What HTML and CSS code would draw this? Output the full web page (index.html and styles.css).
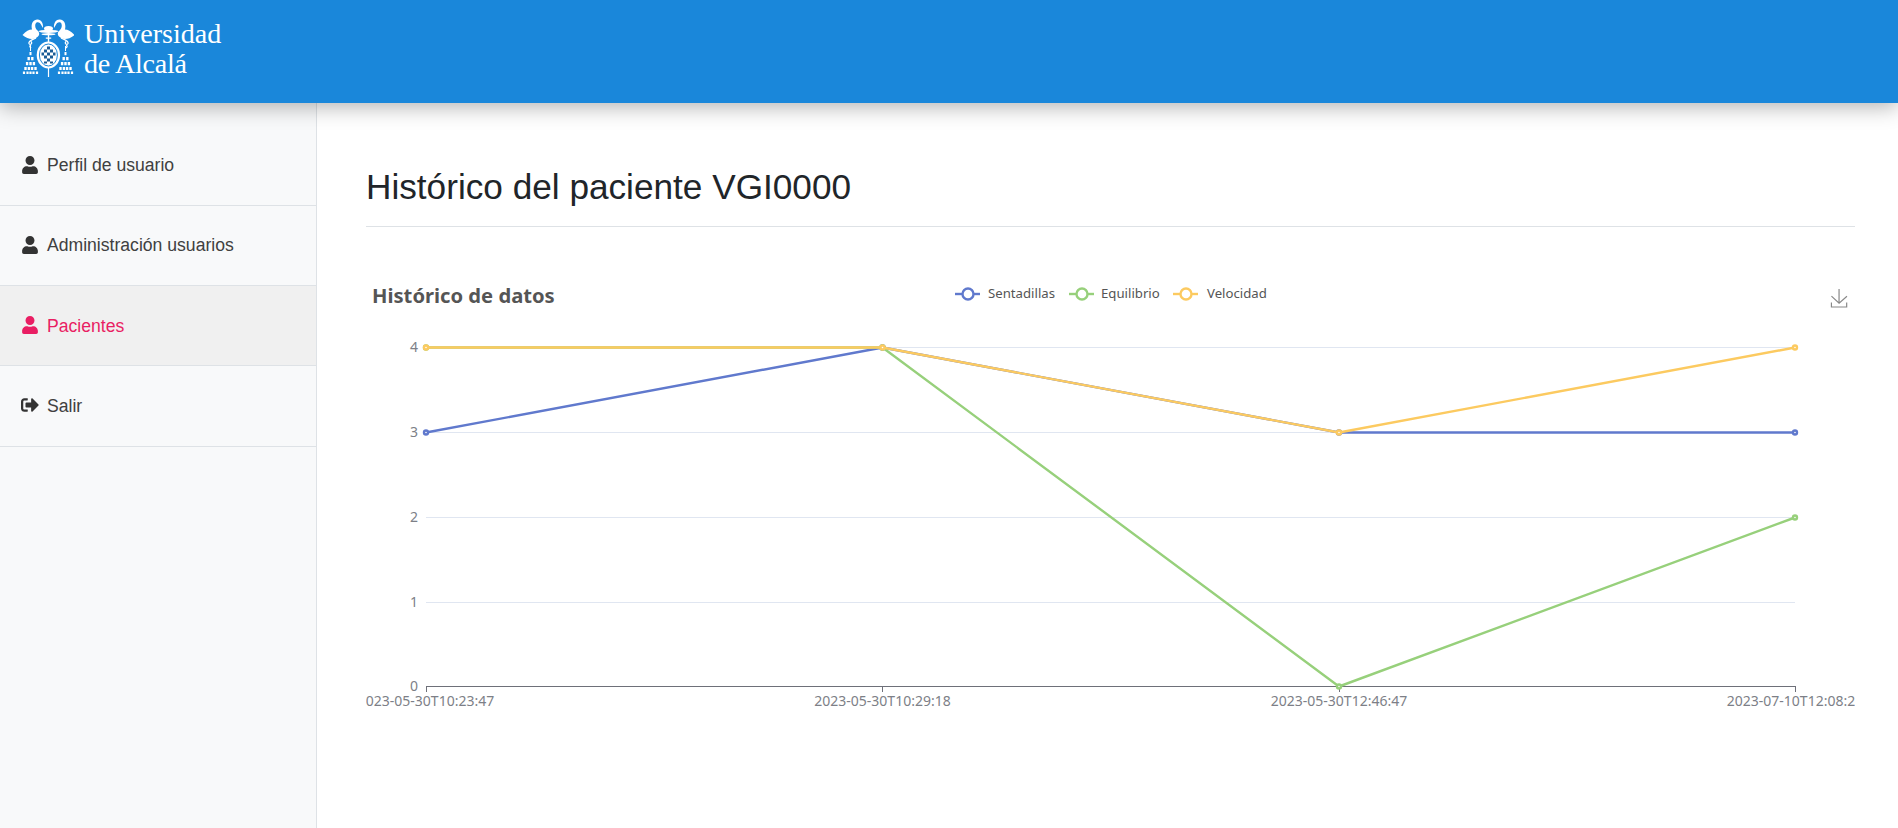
FILE: index.html
```html
<!DOCTYPE html>
<html lang="es">
<head>
<meta charset="utf-8">
<title>Histórico del paciente VGI0000</title>
<link rel="stylesheet" href="styles.css">
</head>
<body>
<header class="topbar">
  <div class="logo">
    <svg class="crest" viewBox="22 18 52 62" width="52" height="62" aria-hidden="true">
      <defs>
        <g id="tassel">
          <path d="M-.5 -6h1v5h-1z"/>
          <path d="M-1 0h2v3.2h-2z"/>
          <path d="M-3 5h2.4v3.2h-2.4zM.6 5h2.4v3.2h-2.4z"/>
          <path d="M-4.6 10h2.4v3.2h-2.4zM-1.2 10h2.4v3.2h-2.4zM2.2 10h2.4v3.2h-2.4z"/>
          <path d="M-6.2 15h2.4v3h-2.4zM-2.8 15h2.4v3h-2.4zM.4 15h2.4v3h-2.4zM3.8 15h2.4v3h-2.4z"/>
          <path d="M-7.6 19.4h2.2v2.6h-2.2zM-4.1 19.4h2.2v2.6h-2.2zM-1.1 19.4h2.2v2.6h-2.2zM1.9 19.4h2.2v2.6h-2.2zM5.4 19.4h2.2v2.6h-2.2z"/>
        </g>
        <path id="swan" d="M22.5 35C26 31 29 29.500 32 29.500C31 25 32 20 37 19.500C41 19 43.500 23 43 28L41.500 25.500C40.500 22.500 38 21.500 36.500 22.500C34.500 24 35 28 37 30C39.500 32 40 34.500 38 36.500C34 40.500 28 39.500 22.500 35Z"/>
      </defs>
      <g class="crest-white">
        <use href="#swan"/>
        <use href="#swan" transform="translate(97 0) scale(-1 1)"/>
        <ellipse cx="48.500" cy="28.500" rx="4.500" ry="2.500"/>
        <ellipse cx="48.500" cy="31.300" rx="10" ry="1.600"/>
        <ellipse cx="48.500" cy="34.200" rx="7" ry="1.100"/>
        <path d="M47.800 35h1.400v7h-1.400zM45.800 37.500h5.400v1.200h-5.400z"/>
        <ellipse cx="48.400" cy="55" rx="11.700" ry="13.600"/>
        <path d="M47.900 67h1.200v10h-1.200z"/>
        <use href="#tassel" transform="translate(30.500 52)"/>
        <use href="#tassel" transform="translate(65.500 52)"/>
      </g>
      <g class="crest-cords">
        <path d="M36 38C32 40 28 41 29 43.500C30 45.500 33 43.500 31 41.500M31 45C29 46 30 47 31 48"/>
        <path d="M61 38C65 40 69 41 68 43.500C67 45.500 64 43.500 66 41.500M66 45C68 46 67 47 66 48"/>
      </g>
      <ellipse class="crest-ring" cx="48.400" cy="55" rx="9" ry="11"/>
      <path class="crest-check" d="M47 46.500h3v3h-3zM44 49.500h3v3h-3zM50 49.500h3v3h-3zM41.500 52.500h2.500v3h-2.500zM47 52.500h3v3h-3zM53 52.500h2.500v3h-2.500zM44 55.500h3v3h-3zM50 55.500h3v3h-3zM47 58.500h3v3h-3zM44 61.500h3v2h-3zM50 61.500h3v2h-3z"/>
    </svg>
    <div class="wordmark"><span>Universidad</span><span class="wordmark-second">de Alcalá</span></div>
  </div>
</header>
<div class="shell">
  <aside class="sidebar">
    <nav class="menu">
      <a class="menu-item" href="#">
        <svg class="menu-icon" viewBox="0 0 448 512"><path d="M224 256c70.700 0 128-57.300 128-128S294.700 0 224 0 96 57.300 96 128s57.300 128 128 128zm89.600 32h-16.700c-22.200 10.200-46.900 16-72.900 16s-50.600-5.800-72.900-16h-16.700C60.200 288 0 348.200 0 422.400V464c0 26.500 21.500 48 48 48h352c26.500 0 48-21.500 48-48v-41.600c0-74.200-60.200-134.400-134.400-134.400z"/></svg>
        <span class="menu-label">Perfil de usuario</span>
      </a>
      <a class="menu-item" href="#">
        <svg class="menu-icon" viewBox="0 0 448 512"><path d="M224 256c70.700 0 128-57.300 128-128S294.700 0 224 0 96 57.300 96 128s57.300 128 128 128zm89.600 32h-16.700c-22.200 10.200-46.900 16-72.900 16s-50.600-5.800-72.900-16h-16.700C60.200 288 0 348.200 0 422.400V464c0 26.500 21.500 48 48 48h352c26.500 0 48-21.500 48-48v-41.600c0-74.200-60.200-134.400-134.400-134.400z"/></svg>
        <span class="menu-label">Administración usuarios</span>
      </a>
      <a class="menu-item is-active" href="#">
        <svg class="menu-icon" viewBox="0 0 448 512"><path d="M224 256c70.700 0 128-57.300 128-128S294.700 0 224 0 96 57.300 96 128s57.300 128 128 128zm89.600 32h-16.700c-22.200 10.200-46.900 16-72.900 16s-50.600-5.800-72.900-16h-16.700C60.200 288 0 348.200 0 422.400V464c0 26.500 21.500 48 48 48h352c26.500 0 48-21.500 48-48v-41.600c0-74.200-60.200-134.400-134.400-134.400z"/></svg>
        <span class="menu-label">Pacientes</span>
      </a>
      <a class="menu-item" href="#">
        <svg class="menu-icon menu-icon-wide" viewBox="0 0 512 512"><path d="M497 273L329 441c-15 15-41 4.500-41-17v-96H152c-13.300 0-24-10.700-24-24v-96c0-13.300 10.700-24 24-24h136V88c0-21.400 25.900-32 41-17l168 168c9.300 9.400 9.300 24.600 0 34zM192 436v-40c0-6.600-5.400-12-12-12H96c-17.700 0-32-14.300-32-32V160c0-17.700 14.300-32 32-32h84c6.600 0 12-5.400 12-12V76c0-6.600-5.400-12-12-12H96c-53 0-96 43-96 96v192c0 53 43 96 96 96h84c6.600 0 12-5.400 12-12z"/></svg>
        <span class="menu-label">Salir</span>
      </a>
    </nav>
  </aside>
  <main class="content">
    <h1 class="page-title">Histórico del paciente VGI0000</h1>
    <svg class="chart" viewBox="366 270 1489 460" width="1489" height="460">
      <text class="chart-title" x="372" y="303">Histórico de datos</text>

      <g class="legend-item sentadillas">
        <path class="legend-line" d="M955 294h25"/><circle cx="968" cy="294" r="5.500"/>
      </g>
      <text class="legend-text" x="988" y="298">Sentadillas</text>
      <g class="legend-item equilibrio">
        <path class="legend-line" d="M1069 294h25"/><circle cx="1082" cy="294" r="5.500"/>
      </g>
      <text class="legend-text" x="1101" y="298">Equilibrio</text>
      <g class="legend-item velocidad">
        <path class="legend-line" d="M1173 294h25"/><circle cx="1186" cy="294" r="5.500"/>
      </g>
      <text class="legend-text" x="1207" y="298">Velocidad</text>

      <path class="save-icon" transform="translate(1830 289) scale(.31)" d="M4.700 22.900L29.300 45.500L54.700 23.400M4.600 43.600L4.600 58L53.800 58L53.800 43.600M29.200 45.100L29.200 0"/>

      <path class="grid" d="M426 347.500H1795M426 432.500H1795M426 517.500H1795M426 602.500H1795"/>
      <path class="axis" d="M426 686.500H1795M426.500 686v6M882.500 686v6M1339.500 686v6M1795.500 686v6"/>

      <text class="y-label" x="418" y="351.500">4</text>
      <text class="y-label" x="418" y="436.500">3</text>
      <text class="y-label" x="418" y="521.500">2</text>
      <text class="y-label" x="418" y="606.500">1</text>
      <text class="y-label" x="418" y="690.500">0</text>

      <text class="x-label" x="426" y="705.500">2023-05-30T10:23:47</text>
      <text class="x-label" x="882.500" y="705.500">2023-05-30T10:29:18</text>
      <text class="x-label" x="1339" y="705.500">2023-05-30T12:46:47</text>
      <text class="x-label" x="1795" y="705.500">2023-07-10T12:08:24</text>

      <g class="series sentadillas">
        <polyline points="426,432.500 882.500,347.500 1339,432.500 1795,432.500"/>
        <circle cx="426" cy="432.500" r="2"/><circle cx="882.500" cy="347.500" r="2"/><circle cx="1339" cy="432.500" r="2"/><circle cx="1795" cy="432.500" r="2"/>
      </g>
      <g class="series equilibrio">
        <polyline points="426,347.500 882.500,347.500 1339,686.500 1795,517.500"/>
        <circle cx="426" cy="347.500" r="2"/><circle cx="882.500" cy="347.500" r="2"/><circle cx="1339" cy="686.500" r="2"/><circle cx="1795" cy="517.500" r="2"/>
      </g>
      <g class="series velocidad">
        <polyline points="426,347.500 882.500,347.500 1339,432.500 1795,347.500"/>
        <circle cx="426" cy="347.500" r="2"/><circle cx="882.500" cy="347.500" r="2"/><circle cx="1339" cy="432.500" r="2"/><circle cx="1795" cy="347.500" r="2"/>
      </g>
    </svg>
  </main>
</div>
</body>
</html>
```
FILE: styles.css
```css
* { box-sizing: border-box; }
html, body { height: 100%; }
body {
  margin: 0;
  height: 828px;
  overflow: hidden;
  display: flex;
  flex-direction: column;
  font-family: "Liberation Sans", Arial, sans-serif;
  background: #fff;
  color: #212529;
}

.topbar {
  height: 103px;
  flex: none;
  background: #1a87da;
  box-shadow: 0 4px 20px rgba(0, 0, 0, .3);
  position: relative;
  z-index: 2;
  padding: 18px 0 0 22px;
}
.logo { display: flex; align-items: flex-start; gap: 10px; }
.crest { display: block; flex: none; }
.crest-white { fill: #fff; }
.crest-cords { fill: none; stroke: #fff; stroke-width: 1.3; }
.crest-ring { fill: none; stroke: #1a87da; stroke-width: 1; }
.crest-check { fill: #1a5c96; }
.wordmark {
  display: flex;
  flex-direction: column;
  margin-top: 1px;
  font-family: "Liberation Serif", "Times New Roman", serif;
  font-size: 28.100px;
  line-height: 30px;
  color: #fff;
}
.wordmark-second { letter-spacing: -.3px; }

.shell { flex: 1; display: flex; min-height: 0; }
.sidebar {
  width: 317px;
  flex: none;
  background: #f8f9fa;
  border-right: 1px solid #dee2e6;
  padding-top: 23px;
}
.menu { display: flex; flex-direction: column; }
.menu-item {
  height: 80px;
  display: flex;
  align-items: center;
  gap: 9px;
  padding-left: 22px;
  padding-bottom: 2px;
  border-bottom: 1px solid #dee2e6;
  font-size: 17.6px;
  color: #404040;
  text-decoration: none;
}
.menu-item:nth-child(4) { height: 81px; }
.menu-item.is-active { background: #f0f0f0; color: #e91e63; }
.menu-label { padding-top: 2px; }
.is-active .menu-label { padding-top: 4px; }
.menu-icon { width: 16px; height: 18px; fill: #333; flex: none; }
.menu-icon-wide { width: 18px; margin: 0 -1px; }
.is-active .menu-icon { fill: #e91e63; }

.content { flex: 1; min-width: 0; padding: 0 43px 0 49px; }
.page-title {
  margin: 0;
  padding: 63px 0 19px;
  height: 124px;
  font-size: 35.2px;
  line-height: 42px;
  font-weight: 400;
  color: #212529;
  border-bottom: 1px solid #dee2e6;
}
.chart { display: block; margin-top: 43px; overflow: hidden; }
.chart-title { font: 700 20.200px "Noto Sans", sans-serif; fill: #555; }
.legend-text { font: 13.200px "Noto Sans", sans-serif; fill: #555; }
.legend-line { fill: none; stroke-width: 2.400; }
.legend-item circle { fill: #fff; stroke-width: 2.400; }
.save-icon { fill: none; stroke: #888; stroke-width: 3.800; }
.grid { fill: none; stroke: #e0e6f1; stroke-width: 1; }
.axis { fill: none; stroke: #6e7079; stroke-width: 1; }
.y-label { font: 14px "Noto Sans", sans-serif; fill: #7d7f87; text-anchor: end; }
.x-label { font: 14px "Noto Sans", sans-serif; fill: #7d7f87; text-anchor: middle; }
.series polyline { fill: none; stroke-width: 2.400; stroke-linejoin: round; }
.series circle { fill: #fff; stroke-width: 2.400; }
.sentadillas polyline, .sentadillas circle, .sentadillas .legend-line { stroke: #6079cd; }
.equilibrio polyline, .equilibrio circle, .equilibrio .legend-line { stroke: #97d07b; }
.velocidad polyline, .velocidad circle, .velocidad .legend-line { stroke: #fcca60; }
```
